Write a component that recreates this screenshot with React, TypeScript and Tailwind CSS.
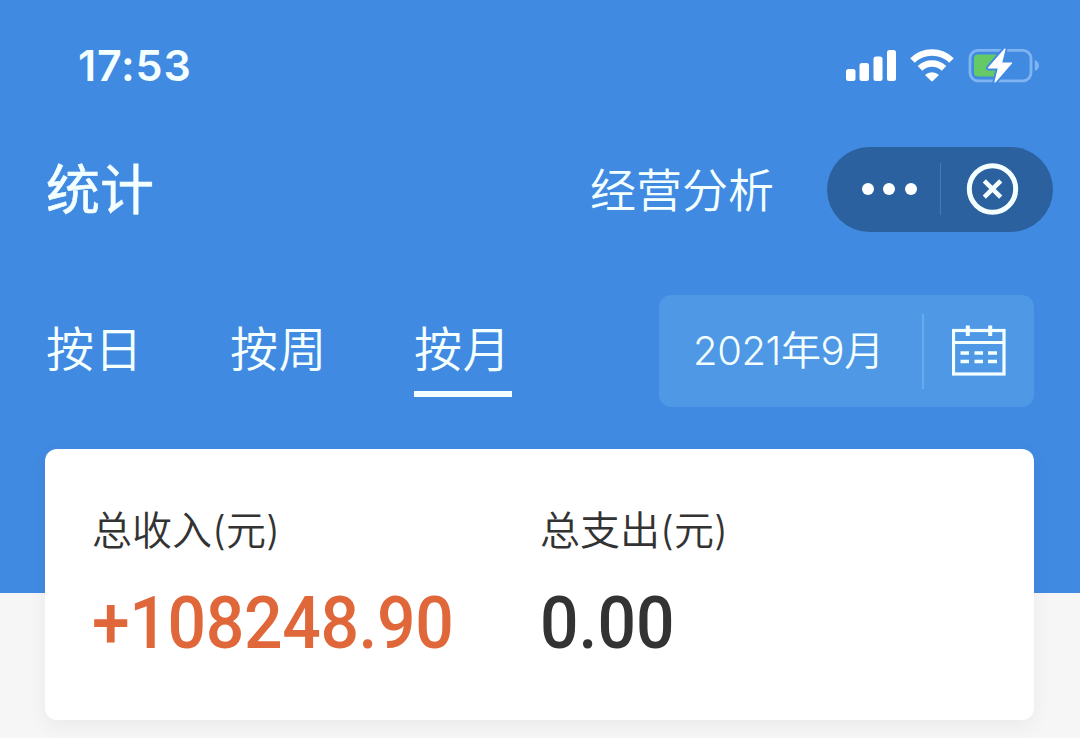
import { useState } from 'react'

type Period = 'day' | 'week' | 'month'

const TABS: { value: Period; label: string }[] = [
    { value: 'day', label: '按日' },
    { value: 'week', label: '按周' },
    { value: 'month', label: '按月' },
]

function StatusIcons() {
    return (
        <svg width="196" height="40" viewBox="844 45 196 40" fill="none">
            <g fill="#fff">
                <rect x="846" y="69" width="9.5" height="12" rx="2.5" />
                <rect x="859.5" y="63" width="9.5" height="18" rx="2.5" />
                <rect x="873.5" y="56.500" width="9" height="24.500" rx="2.5" />
                <rect x="887" y="50" width="9" height="31" rx="2.5" />
            </g>
            <g stroke="#fff" strokeWidth="6.500">
                <path d="M912.500 60.500A28 28 0 0 1 951.500 60.500" />
                <path d="M920 68.400A17.200 17.200 0 0 1 944 68.400" />
            </g>
            <path d="M925 75A10 10 0 0 1 939 75L932.800 81Q932 81.600 931.200 81Z" fill="#fff" />
            <rect x="970" y="50.300" width="61" height="30.500" rx="8" stroke="#7fb4f0" strokeWidth="2.800" />
            <path d="M1034.800 59.800Q1039 62 1039 65.500T1034.800 71Z" fill="#7fb4f0" />
            <rect x="974" y="54.500" width="25" height="22" rx="4" fill="#65c966" />
            <path
                d="M1005 49L988.500 68H998.500L995 82L1011.500 63H1001.500Z"
                fill="#fff"
                stroke="#418ae2"
                strokeWidth="5"
                strokeLinejoin="round"
            />
            <path
                d="M1005 49L988.500 68H998.500L995 82L1011.500 63H1001.500Z"
                fill="#fff"
                stroke="#fff"
                strokeWidth="1.200"
                strokeLinejoin="round"
            />
        </svg>
    )
}

function CalendarIcon() {
    return (
        <svg width="54" height="52" viewBox="952 325 54 52" fill="none" stroke="#f4ffff" strokeWidth="3.200">
            <rect x="953.500" y="330.500" width="50.500" height="43.500" />
            <path d="M953.500 342.500H1004" />
            <path d="M967.800 325.500V336M990.200 325.500V336" strokeWidth="4" />
            <path d="M960.500 353H969M974.500 353H983M988 353H997M960.500 361.500H969M974.500 361.500H983M988 361.500H997" strokeWidth="3.500" />
        </svg>
    )
}

function Capsule() {
    return (
        <div className="flex h-[85px] w-[226px] items-center rounded-full bg-[#2b619e]">
            <button className="flex w-[113px] justify-center gap-[9.5px] pl-[11px]">
                {[...Array(3)].map((_, i) => (
                    <span key={i} className="size-3 rounded-full bg-white" />
                ))}
            </button>
            <span className="h-[52px] w-px bg-[#4a79b0]" />
            <button className="ml-[25px]">
                <svg width="53" height="53" viewBox="0 0 53 53" fill="none" stroke="#f4ffff">
                    <circle cx="26.500" cy="26" r="23.200" strokeWidth="5" />
                    <path d="M18.300 17.800L34.700 34.200M34.700 17.800L18.300 34.200" strokeWidth="4.500" />
                </svg>
            </button>
        </div>
    )
}

export default function App() {
    const [period, setPeriod] = useState<Period>('month')

    return (
        <div className="h-[738px] overflow-hidden bg-[#f6f6f6] font-['Inter','Noto_Sans_CJK_SC',sans-serif]">
            <div className="h-[593px] bg-[#418ae2] text-[#f4ffff]">
                <div className="flex h-[130px] items-start justify-between pr-10 pl-[78px]">
                    <span className="mt-10 text-[43px] leading-[50px] font-semibold tracking-[0.8px]">17:53</span>
                    <div className="mt-[45px]">
                        <StatusIcons />
                    </div>
                </div>

                <div className="flex h-[118px] items-center pr-[27px] pl-[46px]">
                    <h1 className="pt-1 text-[54px] leading-none font-normal [-webkit-text-stroke:0.6px_#f4ffff]">统计</h1>
                    <a className="ml-auto pt-0.5 text-[46px] leading-none font-[350]">经营分析</a>
                    <div className="ml-[53px]">
                        <Capsule />
                    </div>
                </div>

                <div className="flex h-[201px] items-start justify-between pt-[47px] pr-[46px] pl-[46px]">
                    <div className="flex gap-[86px] pt-[26px]">
                        {TABS.map((t) => (
                            <button
                                key={t.value}
                                onClick={() => setPeriod(t.value)}
                                className={`h-[76px] w-[98px] border-b-[6px] pt-0.5 pb-3.5 text-left text-[48px] leading-[54px] font-[350] tracking-[0.5px] whitespace-nowrap ${
                                    period === t.value ? 'border-[#f4ffff]' : 'border-transparent'
                                }`}
                            >
                                {t.label}
                            </button>
                        ))}
                    </div>
                    <button className="flex h-[112px] w-[375px] items-center rounded-xl bg-[#4e98e5]">
                        <span className="w-[263px] pl-[34px] text-left text-[40px] leading-none font-[350] tracking-[-0.4px] whitespace-nowrap">2021年9月</span>
                        <span className="mr-7 h-[75px] w-0.5 bg-[#69a9ed]" />
                        <CalendarIcon />
                    </button>
                </div>

                <div className="mr-[46px] ml-[45px] flex h-[271px] rounded-xl bg-white pt-[61px] pl-[47px] text-[#333] shadow-[0_6px_20px_rgba(0,0,0,0.05)]">
                    <div className="w-[448px]">
                        <p className="text-[40px] leading-[42px] font-[350] whitespace-nowrap">总收入(元)</p>
                        <p className="mt-[31px] origin-left scale-x-[0.93] font-['Roboto',sans-serif] text-[73px] leading-[80px] font-medium tracking-[-0.4px] text-[#e0673a]">
                            +108248.90
                        </p>
                    </div>
                    <div>
                        <p className="text-[40px] leading-[42px] font-[350] whitespace-nowrap">总支出(元)</p>
                        <p className="mt-[31px] origin-left scale-x-[0.93] font-['Roboto',sans-serif] text-[73px] leading-[80px] font-medium">
                            0.00
                        </p>
                    </div>
                </div>
            </div>
        </div>
    )
}
